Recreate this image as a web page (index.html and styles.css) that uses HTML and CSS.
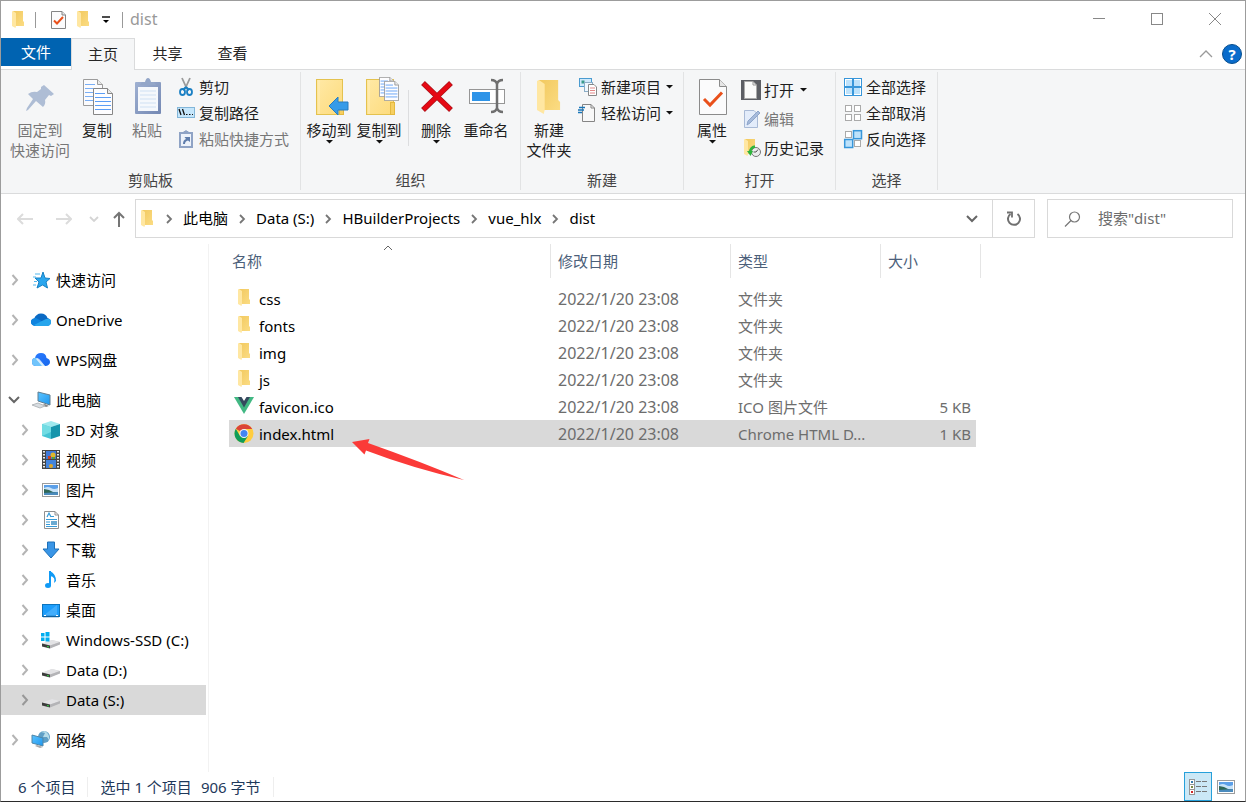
FILE: index.html
```html
<!DOCTYPE html>
<html lang="zh-CN">
<head>
<meta charset="utf-8">
<meta name="viewport" content="width=device-width, initial-scale=1">
<title>dist</title>
<link rel="stylesheet" href="styles.css">
</head>
<body>
<svg class="defs" aria-hidden="true">
  <defs>
    <linearGradient id="gold" x1="0" x2="1" y1="0" y2="1"><stop offset="0" stop-color="#f2c95f"/><stop offset="1" stop-color="#fbdc83"/></linearGradient>
    <linearGradient id="pale" x1="0" x2="1" y1="0" y2="1"><stop offset="0" stop-color="#ffe9a6"/><stop offset="1" stop-color="#fddb7c"/></linearGradient>
    <linearGradient id="steel" x1="0" x2="1" y1="0" y2="1"><stop offset="0" stop-color="#9fb1d2"/><stop offset="1" stop-color="#7488b3"/></linearGradient>
    <linearGradient id="screen" x1="0" x2="1" y1="0" y2="1"><stop offset="0" stop-color="#5cc4ff"/><stop offset="1" stop-color="#1d96ef"/></linearGradient>
    <linearGradient id="wps" x1="0" x2="1" y1="0" y2="1"><stop offset="0" stop-color="#2b7bff"/><stop offset="1" stop-color="#1768ee"/></linearGradient>
  </defs>
  <symbol id="folder" viewBox="0 0 13 18" preserveAspectRatio="none">
    <path d="M1 0H11V10L12 11V15H4L1 15Z" fill="url(#gold)"/><path d="M0 0.5L1 0L4 2V15L3.5 17L0 15Z" fill="#ffe7a2"/>
  </symbol>
  <symbol id="page-check" viewBox="0 0 28 36">
    <path d="M.5.5H20.500L27.500 7.500V35.500H.5Z" fill="#fbfbfc" stroke="#8b8b8b"/><path d="M20.500.5V7.500H27.500" fill="#e6e6e6" stroke="#8b8b8b"/><path d="M5 20L11 26L23 13.500" fill="none" stroke="#e9501b" stroke-width="3"/>
  </symbol>
  <symbol id="mini-check" viewBox="0 0 15 18">
    <path d="M.5.5H11L14.500 4V17.500H.5Z" fill="#fbfbfc" stroke="#858585"/><path d="M11 .5V4H14.500" fill="#e6e6e6" stroke="#858585"/><path d="M3 9.500L6 12.500L12 6" fill="none" stroke="#e9501b" stroke-width="2"/>
  </symbol>
  <symbol id="page-lines" viewBox="0 0 20 27">
    <path d="M.5.5H14.500L19.500 5.500V26.500H.5Z" fill="#fdfdff" stroke="#868686"/><path d="M14.500.5V5.500H19.500" fill="#e8e8e8" stroke="#868686"/><path d="M2 5.500H12M2 9.500H18M2 13.500H18M2 17.500H18M2 21.500H18" stroke="#5b9df5" stroke-width="1.200"/>
  </symbol>
  <symbol id="chev" viewBox="0 0 8 12"><path d="M1.500 1L6 6L1.500 11" fill="none" stroke="currentColor" stroke-width="2"/></symbol>
  <symbol id="crumb" viewBox="0 0 8 10"><path d="M2 1L6 5L2 9" fill="none" stroke="#767676" stroke-width="1.800"/></symbol>
  <symbol id="caret" viewBox="0 0 7 4"><path d="M0 0H7L3.500 3.500Z" fill="#111"/></symbol>
  <symbol id="drive" viewBox="0 0 20 10">
    <path d="M1 5L11 1L19 3V5L9 9L1 7Z" fill="#d2d2d4"/><path d="M1 4.500L11 1L19 3L9 6.500Z" fill="#e3e3e5"/><path d="M1 4.500L9 6.500V9.500L1 7.500Z" fill="#3c3c3c"/><path d="M9 6.500L19 3V5.500L9 9.500Z" fill="#b4b4b7"/><path d="M6 7L8 7.500V8.500L6 8Z" fill="#2fd640"/>
  </symbol>
  <symbol id="picture" viewBox="0 0 18 14">
    <rect x=".5" y=".5" width="17" height="13" fill="#fff" stroke="#9c9c9c"/><rect x="2" y="2" width="14" height="10" fill="#5b9fe8"/><path d="M2 5Q6 3 9 5T16 5V9H2Z" fill="#c7e2f8"/><path d="M2 6L7 7L11 9H16V10H2Z" fill="#2f6757"/><path d="M2 10L16 9V12H2Z" fill="#4b8bbd"/>
  </symbol>
</svg>

<div class="window">
  <header class="titlebar">
    <div class="quick">
      <svg class="i-folder"><use href="#folder"/></svg>
      <i class="bar"></i>
      <button class="plain quick-props" aria-label="属性"><svg class="i-check"><use href="#mini-check"/></svg></button>
      <button class="plain" aria-label="新建文件夹"><svg class="i-folder"><use href="#folder"/></svg></button>
      <button class="plain quick-menu" aria-label="自定义快速访问工具栏"><svg width="8" height="8"><path d="M0 1H8" stroke="#111" stroke-width="1.500"/><path d="M1 4H7L4 7Z"/></svg></button>
      <i class="bar"></i>
      <span class="caption">dist</span>
    </div>
    <div class="controls">
      <button class="plain control" aria-label="最小化"><svg width="12" height="12"><path d="M0 5.500H12" stroke="#888"/></svg></button>
      <button class="plain control" aria-label="最大化"><svg width="12" height="12"><rect x=".5" y=".5" width="11" height="11" fill="none" stroke="#888"/></svg></button>
      <button class="plain control" aria-label="关闭"><svg width="12" height="12"><path d="M0 0L12 12M12 0L0 12" stroke="#888"/></svg></button>
    </div>
  </header>

  <nav class="tabs">
    <button class="plain tab file">文件</button>
    <button class="plain tab active">主页</button>
    <button class="plain tab">共享</button>
    <button class="plain tab">查看</button>
    <div class="tab-tools">
      <button class="plain" aria-label="折叠功能区"><svg width="14" height="8"><path d="M1 7L7 1L13 7" fill="none" stroke="#9a9a9a" stroke-width="1.300"/></svg></button>
      <button class="plain help" aria-label="帮助">?</button>
    </div>
  </nav>

  <section class="ribbon">
    <div class="group g-clip">
      <div class="tools">
        <button class="plain big wide off"><svg class="art" viewBox="0 0 36 36"><path d="M22 7L32 16L29 18L27 17L23 22Q24 26 21 29L14 23L6 32L4 33L5 30L11 21L6 16Q10 13 15 14L19 11L19 9Z" fill="#aebdd5"/></svg>固定到<br>快速访问</button>
        <button class="plain big"><svg class="art" viewBox="0 0 36 36"><use href="#page-lines" x="4" y="1" width="20" height="27" opacity=".8"/><use href="#page-lines" x="14" y="10" width="20" height="27"/></svg>复制</button>
        <button class="plain big off"><svg class="art" viewBox="0 0 36 36"><rect x="6" y="4" width="26" height="32" rx="1" fill="url(#steel)"/><rect x="9" y="9" width="20" height="24" fill="#f5f8fc"/><path d="M11 13H27M11 17H27M11 21H27M11 25H27M11 29H27" stroke="#cfe0f3"/><path d="M11 7L13 4H16Q17 0 19 0T22 4H25L27 7Z" fill="#93a6c8"/></svg>粘贴</button>
        <div class="stack">
          <button class="plain small"><svg class="ico" viewBox="0 0 18 18"><path d="M5 0L10 11M13 0L8 11" stroke="#9b9b9b" stroke-width="1.800"/><path d="M9 9L6 12M9 9L12 12" stroke="#1b80c4" stroke-width="2"/><ellipse cx="5.500" cy="14" rx="2.500" ry="3" fill="none" stroke="#1b80c4" stroke-width="1.800"/><ellipse cx="12.500" cy="14" rx="2.500" ry="3" fill="none" stroke="#1b80c4" stroke-width="1.800"/></svg>剪切</button>
          <button class="plain small"><svg class="ico" viewBox="0 0 18 18"><rect x=".5" y="3.500" width="17" height="10" fill="#c5e6fb" stroke="#82b6d9"/><path d="M2 5L4 11M5.500 5L7.500 11" stroke="#111" stroke-width="1.300"/><path d="M9 10.500H10.500M12 10.500H13.500M15 10.500H16" stroke="#111"/></svg>复制路径</button>
          <button class="plain small off"><svg class="ico" viewBox="0 0 18 18"><rect x="3" y="3" width="12" height="14" fill="#edf2fa" stroke="#8fa3c5" stroke-width="2"/><path d="M5 4L7 1H8Q9-1 10 1H11L13 4Z" fill="#8fa3c5"/><path d="M6 14Q6 10 9 9L7.500 7H13V12L11 10.500Q8 11 8 14Z" fill="#5f7dac"/></svg>粘贴快捷方式</button>
        </div>
      </div>
      <div class="label">剪贴板</div>
    </div>

    <div class="group g-org">
      <div class="tools">
        <button class="plain big"><svg class="art" viewBox="0 0 36 36"><rect x="5.500" y="1.500" width="26" height="35" fill="url(#pale)" stroke="#e4c24f"/><path d="M8 2V36" stroke="#fff0bd"/><rect x="28.500" y="24.500" width="4" height="12" fill="#f6cf61" stroke="#e4b93f"/><path d="M18 28L27 19V24H37V32H27V37Z" fill="#369be8" stroke="#277dc1"/></svg>移动到<svg class="caret"><use href="#caret"/></svg></button>
        <button class="plain big"><svg class="art" viewBox="0 0 36 36"><rect x="5.500" y="1.500" width="27" height="35" fill="url(#pale)" stroke="#e4c24f"/><path d="M8 2V36" stroke="#fff0bd"/><rect x="29.500" y="24.500" width="4" height="12" fill="#f6cf61" stroke="#e4b93f"/><use href="#page-lines" x="18" y="-1" width="15" height="20"/><use href="#page-lines" x="23" y="3" width="15" height="20"/></svg>复制到<svg class="caret"><use href="#caret"/></svg></button>
        <i class="split"></i>
        <button class="plain big"><svg class="art" viewBox="0 0 36 36"><path d="M5 5L33 32M33 5L5 32" stroke="#ab141b" stroke-width="5.500"/><path d="M5.500 5.500L32.500 31.500M32.500 5.500L5.500 31.500" stroke="#e60914" stroke-width="4"/></svg>删除<svg class="caret"><use href="#caret"/></svg></button>
        <button class="plain big"><svg class="art" viewBox="0 0 36 36"><rect x="1.500" y="11.500" width="35" height="14" fill="#fff" stroke="#969696"/><rect x="4" y="14" width="18" height="9" fill="#2e94e8"/><path d="M29 5V31M23 2Q28 2 29 6Q30 2 35 2M23 34Q28 34 29 30Q30 34 35 34" fill="none" stroke="#6f6f6f" stroke-width="2.500"/></svg>重命名</button>
      </div>
      <div class="label">组织</div>
    </div>

    <div class="group g-new">
      <div class="tools">
        <button class="plain big"><svg class="art" viewBox="0 0 36 36"><use href="#folder" x="6" y="2" width="25" height="36"/></svg>新建<br>文件夹</button>
        <div class="stack">
          <button class="plain small"><svg class="ico" viewBox="0 0 18 18"><rect x=".5" y=".5" width="12" height="8" fill="#cfe9fb" stroke="#4a9bd0"/><rect x="2.500" y="2.500" width="3" height="3" fill="#3a9a8b"/><rect x="5.500" y="4.500" width="8" height="9" fill="#f0f8ff" stroke="#8badc6"/><path d="M9.500 6.500H15L17.500 9V17.500H9.500Z" fill="#fff" stroke="#888"/><path d="M11 10H16M11 12.500H16M11 15H16" stroke="#e28888"/></svg>新建项目<svg class="caret"><use href="#caret"/></svg></button>
          <button class="plain small"><svg class="ico" viewBox="0 0 18 18"><path d="M3.500.5H12L15.500 4V17.500H3.500Z" fill="#f8f8f8" stroke="#858585"/><path d="M12 .5V4H15.500" fill="none" stroke="#858585"/><path d="M0 3.500H6M-1 6H5M-1 8.500H3" stroke="#1976b8" stroke-width="1.300"/></svg>轻松访问<svg class="caret"><use href="#caret"/></svg></button>
        </div>
      </div>
      <div class="label">新建</div>
    </div>

    <div class="group g-open">
      <div class="tools">
        <button class="plain big"><svg class="art" viewBox="0 0 36 36"><use href="#page-check" x="5" y="1" width="28" height="36"/></svg>属性<svg class="caret"><use href="#caret"/></svg></button>
        <div class="stack tall">
          <button class="plain small"><svg class="ico" viewBox="0 0 20 20"><rect width="20" height="20" fill="#5d5f65"/><path d="M3.500 1.500H12L15.500 5V18.500H3.500Z" fill="#fbfbfb" stroke="#aaa"/><path d="M12 1.500V5H15.500" fill="none" stroke="#999"/></svg>打开<svg class="caret"><use href="#caret"/></svg></button>
          <button class="plain small off"><svg class="ico" viewBox="0 0 20 20"><path d="M3.500 1.500H13L16.500 5V18.500H3.500Z" fill="#e3ecfa" stroke="#a9bad6"/><path d="M6 16L7 12L17 2L19 4L9 14Z" fill="#a7bbdb" stroke="#8fa6ca"/></svg>编辑</button>
          <button class="plain small"><svg class="ico" viewBox="0 0 20 20"><use href="#folder" x="3" y="1" width="13" height="18"/><circle cx="15" cy="14" r="4.500" fill="#ebeded" stroke="#777"/><path d="M15 14L17 11.500M15 14H12.500" stroke="#555"/><path d="M9 14Q9.500 9.500 14 8.500" fill="none" stroke="#2eb43d" stroke-width="2.500"/><path d="M6 13H12L9.500 18Z" fill="#2eb43d"/></svg>历史记录</button>
        </div>
      </div>
      <div class="label">打开</div>
    </div>

    <div class="group g-select">
      <div class="tools">
        <div class="stack">
          <button class="plain small"><svg class="ico" viewBox="0 0 18 18"><rect x=".5" y=".5" width="17" height="17" fill="#fff" stroke="#3796da"/><g fill="#bde2fb"><rect x="2" y="2" width="6" height="6"/><rect x="10" y="2" width="6" height="6"/><rect x="2" y="10" width="6" height="6"/><rect x="10" y="10" width="6" height="6"/></g><path d="M9 0V18M0 9H18" stroke="#3796da" stroke-width="2"/></svg>全部选择</button>
          <button class="plain small"><svg class="ico" viewBox="0 0 18 18"><g fill="#fff" stroke="#aaa"><rect x="1.500" y="1.500" width="6" height="6"/><rect x="10.500" y="1.500" width="6" height="6"/><rect x="1.500" y="10.500" width="6" height="6"/><rect x="10.500" y="10.500" width="6" height="6"/></g></svg>全部取消</button>
          <button class="plain small"><svg class="ico" viewBox="0 0 18 18"><g fill="#fff" stroke="#aaa"><rect x="1.500" y="1.500" width="6" height="6"/><rect x="10.500" y="10.500" width="6" height="6"/></g><g fill="#bde2fb" stroke="#3796da" stroke-width="1.500"><rect x="9.500" y=".7" width="8" height="8"/><rect x=".7" y="9.500" width="8" height="8"/></g></svg>反向选择</button>
        </div>
      </div>
      <div class="label">选择</div>
    </div>
  </section>

  <div class="navbar">
    <div class="moves">
      <button class="plain" aria-label="后退"><svg width="16" height="12"><path d="M6 1L1 6L6 11M1 6H16" fill="none" stroke="#dcdcdc" stroke-width="2"/></svg></button>
      <button class="plain forward" aria-label="前进"><svg width="16" height="12"><path d="M10 1L15 6L10 11M15 6H0" fill="none" stroke="#dcdcdc" stroke-width="2"/></svg></button>
      <button class="plain recent" aria-label="最近位置"><svg width="10" height="6"><path d="M1 1L5 5L9 1" fill="none" stroke="#d4d4d4" stroke-width="1.800"/></svg></button>
      <button class="plain up" aria-label="上移"><svg width="12" height="16"><path d="M1 7L6 2L11 7M6 2V16" fill="none" stroke="#757575" stroke-width="2"/></svg></button>
    </div>
    <div class="address">
      <svg class="i-folder"><use href="#folder"/></svg>
      <svg class="crumb first"><use href="#crumb"/></svg><a href="#pc">此电脑</a>
      <svg class="crumb"><use href="#crumb"/></svg><a href="#data">Data (S:)</a>
      <svg class="crumb"><use href="#crumb"/></svg><a href="#projects">HBuilderProjects</a>
      <svg class="crumb"><use href="#crumb"/></svg><a href="#vue">vue_hlx</a>
      <svg class="crumb"><use href="#crumb"/></svg><a href="#dist">dist</a>
      <button class="plain history" aria-label="以前的位置"><svg width="12" height="8"><path d="M1 1L6 6L11 1" fill="none" stroke="#666" stroke-width="2"/></svg></button>
      <button class="plain refresh" aria-label="刷新"><svg width="16" height="16"><path d="M11.500 3A6 6 0 1 1 4.500 3" fill="none" stroke="#707070" stroke-width="2"/><path d="M1 1.500H6V6.500" fill="none" stroke="#707070" stroke-width="1.800"/></svg></button>
    </div>
    <label class="search"><svg width="17" height="16"><circle cx="10.500" cy="6" r="5" fill="none" stroke="#777" stroke-width="1.200"/><path d="M7 9.500L1 15.500" stroke="#777" stroke-width="1.200"/></svg><input type="search" aria-label="搜索" placeholder='搜索"dist"'></label>
  </div>

  <div class="body">
    <nav class="tree">
      <a class="node top" href="#quick"><svg class="chev"><use href="#chev"/></svg><svg class="tico" viewBox="0 0 20 20"><path d="M12 2L14 8L19 8.500L15 12L16.500 18L11.500 15L6 18L8 12L4 8H10Z" fill="#2aa6ee" stroke="#1781c4"/><path d="M4 4H9M2 7H5M3 11.500H6M2 15H5" stroke="#53b7ee" stroke-width="1.200"/></svg>快速访问</a>
      <a class="node top" href="#onedrive"><svg class="chev"><use href="#chev"/></svg><svg class="tico" viewBox="0 0 20 20"><path d="M3 9Q5 3.500 10 3.500T16.500 8Q20 9 20 12T16 16H5Q0 15 0 12T3 9Z" fill="#0a6ac4"/><path d="M0 12Q0 8 5 8L14 13L16 16H5Q0 16 0 12Z" fill="#0f84df"/><path d="M3 15L15 9Q20 8 20 12T16 16H5Z" fill="#27a5ec"/></svg>OneDrive</a>
      <a class="node top" href="#wps"><svg class="chev"><use href="#chev"/></svg><svg class="tico" viewBox="0 0 20 20"><path d="M4 8Q5 3 10 3T15.500 8Q19 9 19 12T15 16H5Q1 16 1 12T4 8Z" fill="url(#wps)"/><path d="M1 12Q1 7 6 8L14 16H5Q1 16 1 12Z" fill="#70c4fb"/><path d="M6 8Q8 8 10 11L14 16H11L5 9Z" fill="#fff" opacity=".7"/></svg>WPS网盘</a>
      <a class="node top" href="#pc"><svg class="chev open" viewBox="0 0 12 8"><path d="M1 1L6 6L11 1" fill="none" stroke="#666" stroke-width="2"/></svg><svg class="tico" viewBox="0 0 20 20"><path d="M7 2L19 5V15L7 11Z" fill="url(#screen)" stroke="#617e91"/><path d="M14 14L18 16L15 17L11 15Z" fill="#888"/><path d="M1 15L7 13L14 16L9 18Z" fill="#d8dde1" stroke="#b4b9bd"/></svg>此电脑</a>
      <a class="node" href="#3d"><svg class="chev"><use href="#chev"/></svg><svg class="tico" viewBox="0 0 20 20"><path d="M1 4L10 1L19 4L10 7Z" fill="#9ee9ee"/><path d="M1 4L10 7V19L1 16Z" fill="#45c4d4"/><path d="M10 7L19 4V16L10 19Z" fill="#1595ac"/><path d="M1 4L10 7V12L1 16Z" fill="#71dce3"/></svg>3D 对象</a>
      <a class="node" href="#video"><svg class="chev"><use href="#chev"/></svg><svg class="tico" viewBox="0 0 20 20"><rect x="1" y="0" width="18" height="19" fill="#444"/><rect x="5" y="1" width="10" height="8" fill="#3f78d8"/><rect x="5" y="10" width="10" height="8" fill="#4384dd"/><circle cx="12" cy="5" r="2.500" fill="#dfb72a"/><path d="M7 6H10V9H7Z" fill="#c83f24"/><path d="M11 7H14V9H11Z" fill="#5c9d35"/><circle cx="10" cy="16" r="2" fill="#dfa727"/><path d="M3 1V19M17 1V19" stroke="#eee" stroke-width="2" stroke-dasharray="1.500 1.500"/></svg>视频</a>
      <a class="node" href="#pictures"><svg class="chev"><use href="#chev"/></svg><svg class="tico" viewBox="0 0 20 20"><use href="#picture" x="1" y="3" width="18" height="14"/></svg>图片</a>
      <a class="node" href="#docs"><svg class="chev"><use href="#chev"/></svg><svg class="tico" viewBox="0 0 20 20"><path d="M3.500 1.500H14L17.500 5V18.500H3.500Z" fill="#fff" stroke="#909090"/><path d="M14 1.500V5H17.500" fill="none" stroke="#909090"/><path d="M6 7L8 3L10 7M10 6.500H13M5 9.500H16M5 12H9M5 14.500H9M5 16.500H16" fill="none" stroke="#379bd8" stroke-width="1.200"/><rect x="10" y="11" width="6" height="4" fill="#6aaad2"/></svg>文档</a>
      <a class="node" href="#downloads"><svg class="chev"><use href="#chev"/></svg><svg class="tico" viewBox="0 0 20 20"><path d="M6.500 2H13.500V9H18L10 18L2 9H6.500Z" fill="#3995e6" stroke="#1d70b8"/></svg>下载</a>
      <a class="node" href="#music"><svg class="chev"><use href="#chev"/></svg><svg class="tico" viewBox="0 0 20 20"><ellipse cx="7" cy="15.500" rx="3" ry="2.500" fill="#109af5"/><path d="M9 1V16" stroke="#109af5" stroke-width="2"/><path d="M9 1Q15 4 15 11L13 13Q15 7 9 6Z" fill="#109af5"/></svg>音乐</a>
      <a class="node" href="#desktop"><svg class="chev"><use href="#chev"/></svg><svg class="tico" viewBox="0 0 20 20"><rect x="1.500" y="4.500" width="17" height="12" fill="#1c9dfb" stroke="#0c74bd"/><path d="M2 16L16 5V16Z" fill="#42adfc"/><path d="M2 16.500H18" stroke="#0c60a0" stroke-width="1.500"/><path d="M3 15.500H5M15 15.500H17" stroke="#fff"/></svg>桌面</a>
      <a class="node" href="#c"><svg class="chev"><use href="#chev"/></svg><svg class="tico" viewBox="0 0 20 20"><use href="#drive" y="9" width="20" height="10"/><g fill="#00adef"><rect x="0" y="3" width="3.500" height="3.500"/><rect x="4.500" y="2" width="4" height="4.500"/><rect x="0" y="7.500" width="3.500" height="3.500"/><rect x="4.500" y="7.500" width="4" height="4"/></g></svg>Windows-SSD (C:)</a>
      <a class="node" href="#d"><svg class="chev"><use href="#chev"/></svg><svg class="tico" viewBox="0 0 20 20"><use href="#drive" y="8" width="20" height="10"/></svg>Data (D:)</a>
      <a class="node selected" href="#s"><svg class="chev"><use href="#chev"/></svg><svg class="tico" viewBox="0 0 20 20"><use href="#drive" y="8" width="20" height="10"/></svg>Data (S:)</a>
      <a class="node top" href="#network"><svg class="chev"><use href="#chev"/></svg><svg class="tico" viewBox="0 0 20 20"><circle cx="13" cy="7" r="6" fill="#5f9fc6"/><path d="M10 2L14 3L12 7H16L18 10Q19 4 14 1Z" fill="#b6dce9"/><path d="M1 5L12 8V16L1 13Z" fill="url(#screen)" stroke="#4f86a8"/><path d="M6 15L12 17L9 18L4 16Z" fill="#aaa"/></svg>网络</a>
    </nav>

    <main class="files">
      <table>
        <colgroup><col class="c-name"><col class="c-date"><col class="c-type"><col class="c-size"><col class="c-end"></colgroup>
        <thead><tr><th>名称<svg class="sort" width="10" height="6"><path d="M1 5L5 1L9 5" fill="none" stroke="#666"/></svg></th><th>修改日期</th><th>类型</th><th colspan="2">大小</th></tr></thead>
        <tbody>
          <tr><td><span class="file-name"><svg class="fico" viewBox="0 0 20 20"><use href="#folder" x="4" width="13" height="18"/></svg>css</span></td><td class="date">2022/1/20 23:08</td><td>文件夹</td><td></td><td></td></tr>
          <tr><td><span class="file-name"><svg class="fico" viewBox="0 0 20 20"><use href="#folder" x="4" width="13" height="18"/></svg>fonts</span></td><td class="date">2022/1/20 23:08</td><td>文件夹</td><td></td><td></td></tr>
          <tr><td><span class="file-name"><svg class="fico" viewBox="0 0 20 20"><use href="#folder" x="4" width="13" height="18"/></svg>img</span></td><td class="date">2022/1/20 23:08</td><td>文件夹</td><td></td><td></td></tr>
          <tr><td><span class="file-name"><svg class="fico" viewBox="0 0 20 20"><use href="#folder" x="4" width="13" height="18"/></svg>js</span></td><td class="date">2022/1/20 23:08</td><td>文件夹</td><td></td><td></td></tr>
          <tr><td><span class="file-name"><svg class="fico" viewBox="0 0 20 20"><path d="M0 0H20L10 17Z" fill="#41b883"/><path d="M4 0H16L10 10.500Z" fill="#35495e"/><path d="M7.500 0H12.500L10 4Z" fill="#fff"/></svg>favicon.ico</span></td><td class="date">2022/1/20 23:08</td><td>ICO 图片文件</td><td>5 KB</td><td></td></tr>
          <tr class="selected"><td><span class="file-name"><svg class="fico" viewBox="0 0 20 20"><circle cx="10" cy="9.500" r="9.500" fill="#ffcd40"/><path d="M10 9.500L1.800 4.700A9.500 9.500 0 0 1 18.200 5H10Z" fill="#db4437"/><path d="M1.800 4.700A9.500 9.500 0 0 0 9.500 19L14 12L6 12Z" fill="#0f9d58"/><circle cx="10" cy="9.500" r="4.500" fill="#f3f3f3"/><circle cx="10" cy="9.500" r="3.500" fill="#4285f4"/></svg>index.html</span></td><td class="date">2022/1/20 23:08</td><td>Chrome HTML D...</td><td>1 KB</td><td></td></tr>
        </tbody>
      </table>
      <svg class="pointer" viewBox="0 0 112 42" aria-hidden="true"><path d="M0 3L17.500 0L16 4Q70 23 112 41Q60 29 14 11.500L12.500 15.500Z" fill="#fb3a38"/></svg>
    </main>
  </div>

  <footer class="status">
    <span class="count">6 个项目</span>
    <span class="picked"><span>选中 1 个项目</span><span>906 字节</span></span>
    <div class="views">
      <button class="plain view on" aria-label="详细信息"><svg width="18" height="16"><g fill="#fff" stroke="#969696"><rect x=".5" y=".5" width="5" height="5"/><rect x=".5" y="5.500" width="5" height="5"/><rect x=".5" y="10.500" width="5" height="5"/></g><rect x="2" y="2" width="2" height="2" fill="#367cad"/><rect x="2" y="7" width="2" height="2" fill="#7a8b46"/><rect x="2" y="12" width="2" height="2" fill="#d12828"/><path d="M7 2.500H12M13 2.500H18M7 7.500H12M13 7.500H18M7 12.500H12M13 12.500H18" stroke="#777"/></svg></button>
      <button class="plain view" aria-label="大图标"><svg width="18" height="14"><use href="#picture"/></svg></button>
    </div>
  </footer>
</div>
</body>
</html>
```

FILE: styles.css
```css
* { box-sizing: border-box; }

body {
  margin: 0;
  font: 15px/20px "Noto Sans", "Noto Sans CJK SC", sans-serif;
  color: #000;
  background: #fff;
}

svg { display: block; flex: none; }
a { color: inherit; text-decoration: none; }

.defs { position: absolute; width: 0; height: 0; }

.plain {
  margin: 0;
  padding: 0;
  border: 0;
  background: none;
  font: inherit;
  color: inherit;
}

.window {
  display: flex;
  flex-direction: column;
  min-height: 100vh;
  border: 1px solid #9c9c9c;
  border-bottom-color: #2b2b2b;
}

/* title bar */
.titlebar { display: flex; justify-content: space-between; height: 37px; }
.quick { display: flex; align-items: center; padding-left: 11px; }
.i-folder { width: 13px; height: 18px; }
.i-check { width: 15px; height: 18px; }
.bar { width: 1px; height: 16px; margin-left: 10px; background: #999; }
.quick-props { margin: 0 11px 0 15px; }
.quick-menu { margin: 0 2px 0 12px; }
.caption { margin-left: 7px; padding-bottom: 2px; font-size: 16px; color: #999; }
.controls { display: flex; padding: 0 1px 2px 0; }
.control { display: grid; place-items: center; width: 58px; }

/* tabs */
.tabs { display: flex; height: 32px; border-bottom: 1px solid #dadbdc; color: #262626; }
.tab { width: 65px; height: 30px; }
.tab.file { width: 70px; height: 28px; background: #0063b1; color: #fff; }
.tab.active {
  width: 64px;
  height: 32px;
  padding-bottom: 2px;
  border: 1px solid #dadbdc;
  border-bottom: 0;
  background: #f5f6f7;
}
.tab-tools { display: flex; align-items: center; gap: 9px; margin-left: auto; padding-right: 3px; }
.help {
  width: 20px;
  height: 20px;
  border: 1px solid #084f8f;
  border-radius: 50%;
  background: #0a6ccb;
  color: #fff;
  font-weight: bold;
  line-height: 18px;
}

/* ribbon */
.ribbon {
  display: flex;
  height: 124px;
  padding: 2px 0 3px;
  border-bottom: 1px solid #dadbdc;
  background: #f5f6f7;
  color: #1e1e1e;
}
.group { display: flex; flex-direction: column; border-right: 1px solid #e2e3e4; }
.tools { display: flex; flex: 1; padding-left: 3px; }
.label { text-align: center; color: #444; line-height: 20px; }
.off { color: #777; }
.big {
  display: flex;
  flex-direction: column;
  align-items: center;
  width: 50px;
  padding-top: 6px;
  white-space: nowrap;
}
.big.wide { width: 64px; }
.art { width: 36px; height: 36px; margin-bottom: 6px; overflow: visible; }
.caret { width: 7px; height: 4px; }
.stack { display: flex; flex-direction: column; padding: 2px 0 0 5px; }
.small { display: flex; align-items: center; gap: 4px; height: 26px; white-space: nowrap; }
.small .caret { margin-left: 1px; }
.ico { width: 18px; height: 18px; overflow: visible; }
.stack.tall { padding-left: 4px; padding-top: 3px; }
.tall .small { height: 29px; gap: 3px; }
.tall .caret { margin-left: 3px; }
.tall .ico { width: 20px; height: 20px; }
.split { width: 1px; height: 56px; margin: 18px 2px 0 4px; background: #dcdddf; }
.g-clip { width: 300px; }
.g-clip .tools { padding-left: 7px; }
.g-org { width: 220px; }
.g-new { width: 163px; }
.g-open { width: 152px; }
.g-select { width: 102px; }

/* address row */
.navbar { display: flex; align-items: flex-start; padding: 5px 12px 5px 0; }
.moves { display: flex; align-items: center; width: 134px; height: 40px; padding-left: 16px; }
.forward { margin-left: 23px; }
.recent { margin-left: 17px; }
.up { margin-left: 14px; }
.address { display: flex; flex: 1; align-items: center; height: 39px; padding-left: 5px; border: 1px solid #d9d9d9; }
.address a { padding-bottom: 2px; }
.crumb { width: 8px; height: 10px; margin: 0 10px; }
.crumb.first { margin-left: 11px; }
.history { margin-left: auto; padding: 0 14px; height: 100%; }
.refresh { display: grid; place-items: center; width: 42px; height: 100%; border-left: 1px solid #d9d9d9; }
.search {
  display: flex;
  align-items: center;
  gap: 17px;
  width: 186px;
  height: 39px;
  margin-left: 12px;
  padding: 0 16px;
  border: 1px solid #d9d9d9;
}
.search input { width: 100%; min-width: 0; padding: 0 0 2px; border: 0; outline: 0; background: none; font: inherit; }
.search input::placeholder { color: #6d6d6d; opacity: 1; }

/* body */
.body { display: flex; flex: 1; }
.tree {
  display: flex;
  flex-direction: column;
  width: 208px;
  padding: 11px 2px 0 0;
  border-right: 1px solid #f2f2f2;
}
.node { display: flex; align-items: center; height: 30px; padding-left: 20px; white-space: nowrap; }
.node.top { margin-top: 10px; padding-left: 10px; }
.node.selected { background: #d9d9d9; }
.chev { width: 8px; height: 12px; margin-right: 12px; color: #b4b4b4; }
.selected .chev { color: #989898; }
.chev.open { width: 12px; height: 8px; margin: 0 11px 0 -3px; }
.tico { width: 20px; height: 20px; margin-right: 5px; }

.files { position: relative; flex: 1; padding-left: 20px; }
table { width: 752px; table-layout: fixed; border-collapse: separate; border-spacing: 0; }
.c-name { width: 322px; }
.c-date { width: 180px; }
.c-type { width: 150px; }
.c-size { width: 95px; }
.c-end { width: 5px; }
th {
  position: relative;
  height: 34px;
  padding: 0 0 0 7px;
  border-right: 1px solid #e5e5e5;
  text-align: left;
  font-weight: normal;
  color: #4c607a;
}
th:first-child { padding-left: 3px; }
.sort { position: absolute; top: 1px; left: calc(50% - 7px); }
tbody::before { content: ""; display: block; height: 7px; }
td { height: 27px; padding: 0 0 0 7px; color: #6d6d6d; white-space: nowrap; }
td:first-child { padding-left: 5px; color: #000; }
td.date { font-size: 16px; }
td:nth-child(4) { padding: 0 5px 0 0; text-align: right; }
td:last-child { padding: 0; }
.file-name { display: flex; align-items: center; gap: 5px; }
.fico { width: 20px; height: 20px; }
tr.selected td:not(:last-child) { background: #d9d9d9; }
.pointer { position: absolute; top: 195px; left: 143px; width: 112px; height: 42px; }

/* status bar */
.status { display: flex; align-items: center; height: 29px; padding-left: 17px; color: #1e395b; }
.count { padding-right: 12px; border-right: 1px solid #eee; }
.picked { display: flex; gap: 9px; padding: 0 12px; border-right: 1px solid #eee; }
.views { display: flex; margin-left: auto; padding-right: 5px; }
.view { display: grid; place-items: center; width: 28px; height: 29px; }
.view.on { border: 1px solid #26a0da; background: #cbe8f6; }
```
